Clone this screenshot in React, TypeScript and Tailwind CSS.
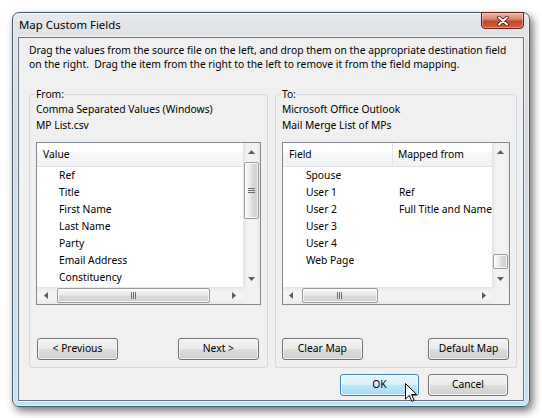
import React from "react";
import clsx from "clsx";

type Dir = "up" | "down" | "left" | "right";

const ARROWS: Record<Dir, { w: number; h: number; pts: string }> = {
  up: { w: 7, h: 4, pts: "0,4 3.5,0 7,4" },
  down: { w: 7, h: 4, pts: "0,0 3.5,4 7,0" },
  left: { w: 4, h: 7, pts: "4,0 0,3.5 4,7" },
  right: { w: 4, h: 7, pts: "0,0 4,3.5 0,7" },
};

const LEFT_ROWS = ["Ref", "Title", "First Name", "Last Name", "Party", "Email Address", "Constituency"];

const RIGHT_ROWS: [string, string][] = [
  ["Spouse", ""],
  ["User 1", "Ref"],
  ["User 2", "Full Title and Name"],
  ["User 3", ""],
  ["User 4", ""],
  ["Web Page", ""],
];

function Arrow({ dir }: { dir: Dir }) {
  const a = ARROWS[dir];
  return (
    <svg width={a.w} height={a.h} viewBox={`0 0 ${a.w} ${a.h}`}>
      <polygon points={a.pts} fill="#5c5c5c" />
    </svg>
  );
}

function VScroll({ thumb, grip }: { thumb: string; grip?: boolean }) {
  return (
    <div className="flex w-[17px] shrink-0 flex-col bg-[linear-gradient(to_right,#e4e4e4,#f3f3f3_25%,#f3f3f3_75%,#e9e9e9)]">
      <div className="flex h-[17px] shrink-0 items-center justify-center">
        <Arrow dir="up" />
      </div>
      <div className="flex flex-1 flex-col px-[1px]">
        <div
          className={clsx(
            "flex flex-col items-center justify-center gap-[1px] rounded-[2px] border border-[#9b9b9b] bg-[linear-gradient(to_right,#f8f8f8,#e8e8e8_45%,#d9d9d9_55%,#d0d0d0)] shadow-[inset_0_0_0_1px_rgba(255,255,255,0.75)]",
            thumb,
          )}
        >
          {grip && (
            <>
              <span className="h-[1px] w-[7px] bg-[#6e6e6e]" />
              <span className="h-[1px] w-[7px] bg-[#6e6e6e]" />
              <span className="h-[1px] w-[7px] bg-[#6e6e6e]" />
            </>
          )}
        </div>
      </div>
      <div className="flex h-[17px] shrink-0 items-center justify-center">
        <Arrow dir="down" />
      </div>
    </div>
  );
}

function HScroll({ thumb }: { thumb: string }) {
  return (
    <div className="flex min-w-0 flex-1 bg-[linear-gradient(to_bottom,#e4e4e4,#f3f3f3_25%,#f3f3f3_75%,#e9e9e9)]">
      <div className="flex w-[17px] shrink-0 items-center justify-center">
        <Arrow dir="left" />
      </div>
      <div className="flex flex-1 py-[1px]">
        <div
          className={clsx(
            "flex items-center justify-center gap-[1px] rounded-[2px] border border-[#9b9b9b] bg-[linear-gradient(to_bottom,#f8f8f8,#e8e8e8_45%,#d9d9d9_55%,#d0d0d0)] shadow-[inset_0_0_0_1px_rgba(255,255,255,0.75)]",
            thumb,
          )}
        >
          <span className="h-[7px] w-[1px] bg-[#6e6e6e]" />
          <span className="h-[7px] w-[1px] bg-[#6e6e6e]" />
          <span className="h-[7px] w-[1px] bg-[#6e6e6e]" />
        </div>
      </div>
      <div className="flex w-[17px] shrink-0 items-center justify-center">
        <Arrow dir="right" />
      </div>
    </div>
  );
}

function Btn({ children, className, blue }: { children: React.ReactNode; className?: string; blue?: boolean }) {
  return (
    <button
      type="button"
      className={clsx(
        "flex h-[22px] items-center justify-center rounded-[3px] border shadow-[inset_0_0_0_1px_rgba(255,255,255,0.7)]",
        blue
          ? "border-[#3c7fb1] bg-[linear-gradient(to_bottom,#eaf6fd_0%,#d9f0fc_50%,#bee6fd_50%,#a7d9f5_100%)]"
          : "border-[#707070] bg-[linear-gradient(to_bottom,#f2f2f2_0%,#ebebeb_50%,#dddddd_50%,#cfcfcf_100%)]",
        className,
      )}
    >
      {children}
    </button>
  );
}

const HEADER_BG =
  "bg-[linear-gradient(to_bottom,#ffffff_0%,#ffffff_40%,#f6f7f8_42%,#f1f2f4_100%)] border-b border-[#dfe1e4]";

export default function App() {
  return (
    <div className="relative h-[418px] w-[542px] overflow-hidden bg-white pl-[12px] pt-[12px] font-['Noto_Sans',sans-serif] text-[10.3px] text-black">
      <div className="relative flex h-[395px] w-[518px] flex-col rounded-[7px] border border-[#4a5764] bg-[linear-gradient(to_bottom,#e7e9ec_0%,#dcdfe3_8%,#cfd8e1_40%,#c5deef_75%,#c0e2f7_100%)] shadow-[inset_0_0_0_1px_rgba(255,255,255,0.55),3px_4px_9px_rgba(0,0,0,0.55)]">
        {/* title bar */}
        <div className="flex h-[24px] shrink-0 items-center pl-[6px] text-[11.4px]">Map Custom Fields</div>

        <button
          type="button"
          aria-label="Close"
          className="absolute right-[5px] top-[-1px] flex h-[17px] w-[43px] items-center justify-center rounded-b-[4px] border border-[#5e2418] bg-[linear-gradient(to_bottom,#eab2a4_0%,#d98a74_40%,#c4472d_55%,#d0623f_100%)] shadow-[inset_0_0_0_1px_rgba(255,255,255,0.35)]"
        >
          <svg width="12" height="10" viewBox="0 0 12 10">
            <path d="M2 1.5 L10 8.5 M10 1.5 L2 8.5" stroke="#4a160c" strokeWidth="3.6" strokeLinecap="round" />
            <path d="M2 1.5 L10 8.5 M10 1.5 L2 8.5" stroke="#ffffff" strokeWidth="2" strokeLinecap="round" />
          </svg>
        </button>

        {/* client area */}
        <div className="mx-[5px] flex flex-1 flex-col border border-[#66737f] bg-[#f0f0f0] pl-[10px] pr-[6px] pt-[5px] shadow-[0_0_0_1px_rgba(255,255,255,0.6)]">
          <p className="whitespace-nowrap leading-[14px]">
            Drag the values from the source file on the left, and drop them on the appropriate destination field
            <br />
            on the right.&nbsp; Drag the item from the right to the left to remove it from the field mapping.
          </p>

          <div className="mt-[17px] flex gap-[7px]">
            {/* From */}
            <fieldset className="w-[241px] rounded-[3px] border border-[#d3d9de] px-[6px] pb-[7px]">
              <legend className="-ml-[1px] px-[1px] leading-[13px]">From:</legend>
              <div className="flex flex-col">
                <div className="leading-[16px]">Comma Separated Values (Windows)</div>
                <div className="leading-[16px]">MP List.csv</div>

                <div className="mt-[9px] flex h-[163px] flex-col border border-[#828790] bg-white">
                  <div className="flex min-h-0 flex-1">
                    <div className="flex min-w-0 flex-1 flex-col overflow-hidden">
                      <div className={clsx("flex h-[24px] shrink-0 items-center pl-[6px]", HEADER_BG)}>Value</div>
                      <div className="pl-[22px]">
                        {LEFT_ROWS.map((r) => (
                          <div key={r} className="h-[17px] leading-[17px]">
                            {r}
                          </div>
                        ))}
                      </div>
                    </div>
                    <VScroll thumb="mt-[2px] h-[57px]" grip />
                  </div>
                  <div className="flex h-[17px] shrink-0">
                    <HScroll thumb="ml-[3px] w-[153px]" />
                    <div className="w-[17px] bg-[#f0f0f0]" />
                  </div>
                </div>

                <div className="mt-[33px] flex justify-between pl-[1px] pr-[2px]">
                  <Btn className="w-[81px]">&lt; Previous</Btn>
                  <Btn className="w-[81px]">Next &gt;</Btn>
                </div>
              </div>
            </fieldset>

            {/* To */}
            <fieldset className="w-[240px] rounded-[3px] border border-[#d3d9de] px-[6px] pb-[7px]">
              <legend className="-ml-[1px] px-[1px] leading-[13px]">To:</legend>
              <div className="flex flex-col">
                <div className="leading-[16px]">Microsoft Office Outlook</div>
                <div className="leading-[16px]">Mail Merge List of MPs</div>

                <div className="mt-[9px] flex h-[163px] flex-col border border-[#828790] bg-white">
                  <div className="flex min-h-0 flex-1">
                    <div className="flex min-w-0 flex-1 flex-col overflow-hidden">
                      <div className={clsx("flex h-[24px] shrink-0", HEADER_BG)}>
                        <div className="flex w-[110px] shrink-0 items-center border-r border-[#e4e6e8] pl-[6px]">Field</div>
                        <div className="flex items-center whitespace-nowrap pl-[5px]">Mapped from</div>
                      </div>
                      {RIGHT_ROWS.map(([f, m]) => (
                        <div key={f} className="flex h-[17px] whitespace-nowrap leading-[17px]">
                          <div className="w-[110px] shrink-0 pl-[23px]">{f}</div>
                          <div className="pl-[6px]">{m}</div>
                        </div>
                      ))}
                    </div>
                    <VScroll thumb="mt-[94px] h-[15px]" />
                  </div>
                  <div className="flex h-[17px] shrink-0">
                    <HScroll thumb="ml-[2px] w-[76px]" />
                    <div className="w-[17px] bg-[#f0f0f0]" />
                  </div>
                </div>

                <div className="mt-[33px] flex justify-between pr-[1px]">
                  <Btn className="w-[81px]">Clear Map</Btn>
                  <Btn className="w-[81px]">Default Map</Btn>
                </div>
              </div>
            </fieldset>
          </div>

          <div className="mt-[6px] flex justify-end gap-[9px] pr-[9px]">
            <Btn blue className="w-[79px]">
              OK
            </Btn>
            <Btn className="w-[80px]">Cancel</Btn>
          </div>
        </div>
        <div className="h-[5px] shrink-0" />
      </div>

      {/* mouse pointer over OK */}
      <svg className="absolute left-[405px] top-[383px]" width="13" height="20" viewBox="0 0 13 20">
        <path
          d="M0.5 0.5 L0.5 16 L4.3 12.4 L6.9 18.4 L9.2 17.4 L6.6 11.5 L11.6 11.5 Z"
          fill="#ffffff"
          stroke="#000000"
          strokeWidth="1"
          strokeLinejoin="round"
        />
      </svg>
    </div>
  );
}
